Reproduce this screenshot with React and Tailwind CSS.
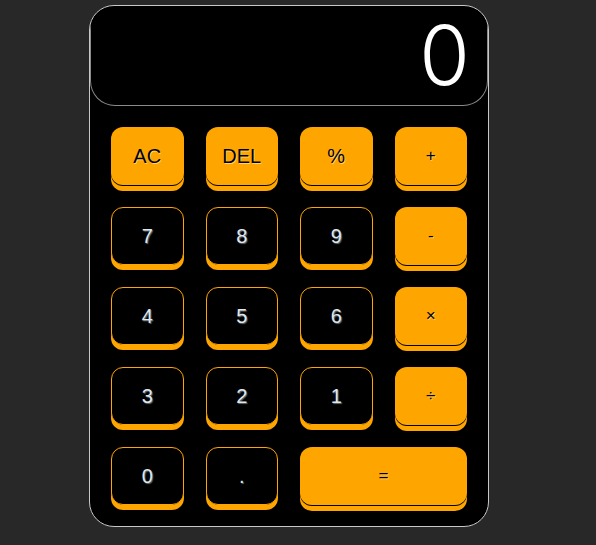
const keys = [
  { label: 'AC', op: true, big: true },
  { label: 'DEL', op: true, big: true },
  { label: '%', op: true, big: true },
  { label: '+', op: true },
  { label: '7' },
  { label: '8' },
  { label: '9' },
  { label: '-', op: true },
  { label: '4' },
  { label: '5' },
  { label: '6' },
  { label: '×', op: true },
  { label: '3' },
  { label: '2' },
  { label: '1' },
  { label: '÷', op: true },
  { label: '0' },
  { label: '.' },
  { label: '=', op: true, wide: true },
];

function Key({ label, op, big, wide }) {
  if (op) {
    return (
      <button
        className={`h-[58px] rounded-[12px] bg-[#ffa500] text-black shadow-[0_1px_0_#000,0_6px_0_#ffa500] [text-shadow:1px_1px_0_#ffcf70] ${
          big ? 'text-[20px]' : 'text-[17px]'
        } ${wide ? 'col-span-2' : ''}`}
      >
        {label}
      </button>
    );
  }
  return (
    <button className="h-[58px] rounded-[12px] border border-[#ffa500] bg-black text-[20px] text-[#dfe7ee] shadow-[0_5px_0_#ffa500] [text-shadow:1px_1px_1px_#6a6a6a]">
      {label}
    </button>
  );
}

export default function App() {
  return (
    <div className="flex min-h-[545px] w-full justify-center bg-[#282828] pr-[18px] pt-[5px] font-['Liberation_Sans',Arial,sans-serif]">
      <div className="h-[522px] w-[400px] overflow-hidden rounded-[25px] border border-[#c8c8c8] bg-black">
        <div className="flex h-[100px] items-center justify-end rounded-b-[25px] border-b border-l border-r border-[#8a8a8a] pr-[17px]">
          <span className="pt-[2px] font-['Inter',sans-serif] text-[82px] font-light leading-[1.1] text-white">0</span>
        </div>
        <div className="grid grid-cols-4 gap-x-[22px] gap-y-[22px] px-[21px] pt-[21px]">
          {keys.map((k) => (
            <Key key={k.label} {...k} />
          ))}
        </div>
      </div>
    </div>
  );
}
